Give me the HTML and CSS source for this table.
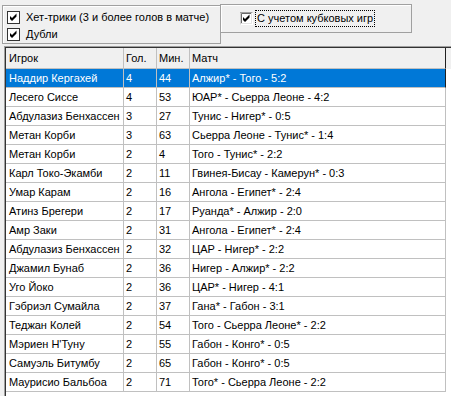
FILE: index.html
```html
<!DOCTYPE html>
<html lang="ru">
<head>
<meta charset="utf-8">
<title>Хет-трики</title>
<link rel="stylesheet" href="styles.css">
</head>
<body>
<div class="top">
  <div class="panel panel-left">
    <label class="cb">
      <svg class="box" width="13" height="13" viewBox="0 0 13 13"><rect x="0.5" y="0.5" width="12" height="12" fill="#fff" stroke="#333"/><path d="M3 5 L5 7 L9.5 2.5 L9.5 5.5 L5 10 L3 8 Z" fill="#000"/></svg>
      <span class="lbl">Хет-трики (3 и более голов в матче)</span>
    </label>
    <label class="cb">
      <svg class="box" width="13" height="13" viewBox="0 0 13 13"><rect x="0.5" y="0.5" width="12" height="12" fill="#fff" stroke="#333"/><path d="M3 5 L5 7 L9.5 2.5 L9.5 5.5 L5 10 L3 8 Z" fill="#000"/></svg>
      <span class="lbl">Дубли</span>
    </label>
  </div>
  <div class="panel panel-right">
    <label class="cb">
      <svg class="box" width="13" height="13" viewBox="0 0 13 13"><rect x="0" y="0" width="13" height="13" fill="#fff"/><path d="M0 12.5 V0.5 H12.5" fill="none" stroke="#a0a0a0"/><path d="M1 11.5 H11.5 V1" fill="none" stroke="#e3e3e3"/><path d="M1.5 11 V1.5 H11" fill="none" stroke="#696969"/><path d="M3 5 L5 7 L9.5 2.5 L9.5 5.5 L5 10 L3 8 Z" fill="#000"/></svg>
      <span class="lbl focus">С учетом кубковых игр</span>
    </label>
  </div>
</div>
<div class="grid">
  <div class="grid-inner">
    <div class="row head">
      <div class="c c1">Игрок</div><div class="c c2">Гол.</div><div class="c c3">Мин.</div><div class="c c4">Матч</div>
    </div>
    <div class="row sel"><div class="c c1">Наддир Кергахей</div><div class="c c2">4</div><div class="c c3">44</div><div class="c c4">Алжир* - Того - 5:2</div></div>
    <div class="row"><div class="c c1">Лесего Сиссе</div><div class="c c2">4</div><div class="c c3">53</div><div class="c c4">ЮАР* - Сьерра Леоне - 4:2</div></div>
    <div class="row"><div class="c c1">Абдулазиз Бенхассен</div><div class="c c2">3</div><div class="c c3">27</div><div class="c c4">Тунис - Нигер* - 0:5</div></div>
    <div class="row"><div class="c c1">Метан Корби</div><div class="c c2">3</div><div class="c c3">63</div><div class="c c4">Сьерра Леоне - Тунис* - 1:4</div></div>
    <div class="row"><div class="c c1">Метан Корби</div><div class="c c2">2</div><div class="c c3">4</div><div class="c c4">Того - Тунис* - 2:2</div></div>
    <div class="row"><div class="c c1">Карл Токо-Экамби</div><div class="c c2">2</div><div class="c c3">11</div><div class="c c4">Гвинея-Бисау - Камерун* - 0:3</div></div>
    <div class="row"><div class="c c1">Умар Карам</div><div class="c c2">2</div><div class="c c3">16</div><div class="c c4">Ангола - Египет* - 2:4</div></div>
    <div class="row"><div class="c c1">Атинз Брегери</div><div class="c c2">2</div><div class="c c3">17</div><div class="c c4">Руанда* - Алжир - 2:0</div></div>
    <div class="row"><div class="c c1">Амр Заки</div><div class="c c2">2</div><div class="c c3">31</div><div class="c c4">Ангола - Египет* - 2:4</div></div>
    <div class="row"><div class="c c1">Абдулазиз Бенхассен</div><div class="c c2">2</div><div class="c c3">32</div><div class="c c4">ЦАР - Нигер* - 2:2</div></div>
    <div class="row"><div class="c c1">Джамил Бунаб</div><div class="c c2">2</div><div class="c c3">36</div><div class="c c4">Нигер - Алжир* - 2:2</div></div>
    <div class="row"><div class="c c1">Уго Йоко</div><div class="c c2">2</div><div class="c c3">36</div><div class="c c4">ЦАР* - Нигер - 4:1</div></div>
    <div class="row"><div class="c c1">Гэбриэл Сумайла</div><div class="c c2">2</div><div class="c c3">37</div><div class="c c4">Гана* - Габон - 3:1</div></div>
    <div class="row"><div class="c c1">Теджан Колей</div><div class="c c2">2</div><div class="c c3">54</div><div class="c c4">Того - Сьерра Леоне* - 2:2</div></div>
    <div class="row"><div class="c c1">Мэриен Н'Туну</div><div class="c c2">2</div><div class="c c3">55</div><div class="c c4">Габон - Конго* - 0:5</div></div>
    <div class="row"><div class="c c1">Самуэль Битумбу</div><div class="c c2">2</div><div class="c c3">65</div><div class="c c4">Габон - Конго* - 0:5</div></div>
    <div class="row"><div class="c c1">Маурисио Бальбоа</div><div class="c c2">2</div><div class="c c3">71</div><div class="c c4">Того* - Сьерра Леоне - 2:2</div></div>
  </div>
</div>
</body>
</html>
```

FILE: styles.css
```css
html, body {
  margin: 0;
  padding: 0;
  overflow: hidden;
}
body {
  background: #f0f0f0;
  font-family: "Liberation Sans", Arial, sans-serif;
  font-size: 11px;
  color: #000;
  width: 451px;
  height: 396px;
}
.top {
  display: flex;
  align-items: flex-start;
  height: 46px;
}
.panel {
  box-sizing: border-box;
  border: 1px solid #a0a0a0;
  box-shadow: inset 1px 1px 0 #fff;
}
.panel-left {
  margin-left: 2px;
  margin-top: 5px;
  width: 219px;
  height: 39px;
  padding: 5px 0 0 4px;
}
.panel-right {
  margin-left: -1px;
  margin-top: 4px;
  width: 192px;
  height: 29px;
  padding: 7px 0 0 19px;
}
.cb {
  display: flex;
  align-items: center;
  height: 13px;
  line-height: 13px;
  margin-bottom: 4px;
  white-space: nowrap;
}
.box {
  display: block;
  flex: none;
}
.panel-left .lbl {
  margin-left: 6px;
  position: relative;
}
.focus {
  margin-left: 3px;
  outline: 1px dotted #000;
  outline-offset: 0;
  padding: 1px 1px;
  line-height: 13px;
}
.grid {
  margin-left: 4px;
  border-top: 1px solid #a0a0a0;
  border-left: 1px solid #a0a0a0;
  height: 360px;
}
.grid-inner {
  border-top: 1px solid #333;
  border-left: 1px solid #333;
  background: #fff;
  height: 100%;
}
.row {
  display: flex;
  height: 19px;
  line-height: 18px;
  white-space: nowrap;
}
.row.head {
  height: 21px;
  line-height: 20px;
  background: #f0f0f0;
}
.c {
  box-sizing: border-box;
  border-right: 1px solid #c0c0c0;
  border-bottom: 1px solid #c0c0c0;
  padding-left: 2px;
  overflow: hidden;
  flex: none;
}
.c1 { width: 118px; padding-left: 3px; }
.c2 { width: 33px; }
.c3 { width: 33px; }
.c4 { width: 256px; }
.head .c4, .sel .c4 { border-right-color: #202020; }
.sel .c {
  background: #0078d7;
  color: #fff;
}
```
